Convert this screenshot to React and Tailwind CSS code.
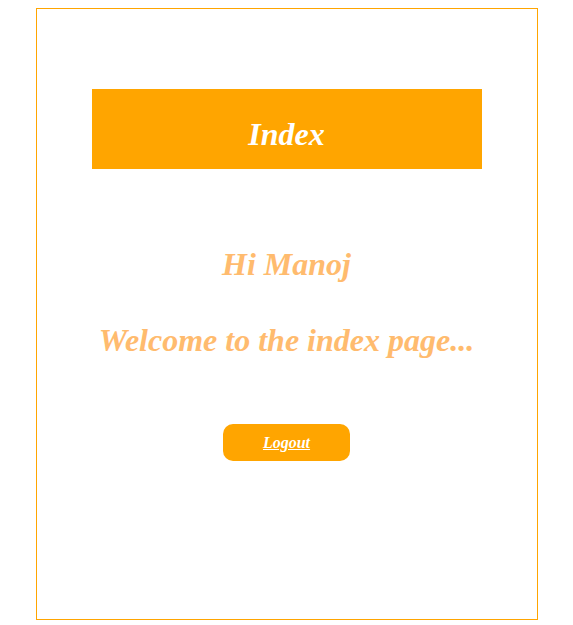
import React from 'react'

const App = () => {
  return (
    <div className='min-h-screen bg-white pt-2' style={{ fontFamily: '"Liberation Serif", "Times New Roman", serif' }}>
      <div className='mx-auto w-[502px] h-[612px] border border-[#ffa500]'>
        <div className='mx-auto mt-[80px] w-[390px] h-[80px] bg-[#ffa500] pt-[27px]'>
          <h1 className='text-center text-[32px] leading-[37px] font-bold italic text-white'>Index</h1>
        </div>
        <h1 className='mt-[77px] text-center text-[32px] leading-[37px] font-bold italic text-[#ffbb6e]'>Hi Manoj</h1>
        <h1 className='mt-[39px] text-center text-[32px] leading-[37px] font-bold italic text-[#ffbb6e]'>Welcome to the index page...</h1>
        <div className='flex justify-center mt-[65px]'>
          <button
            type='button'
            className='w-[127px] h-[37px] rounded-[10px] bg-[#ffa500] text-white text-base font-bold italic underline cursor-pointer'
          >
            Logout
          </button>
        </div>
      </div>
    </div>
  )
}

export default App
